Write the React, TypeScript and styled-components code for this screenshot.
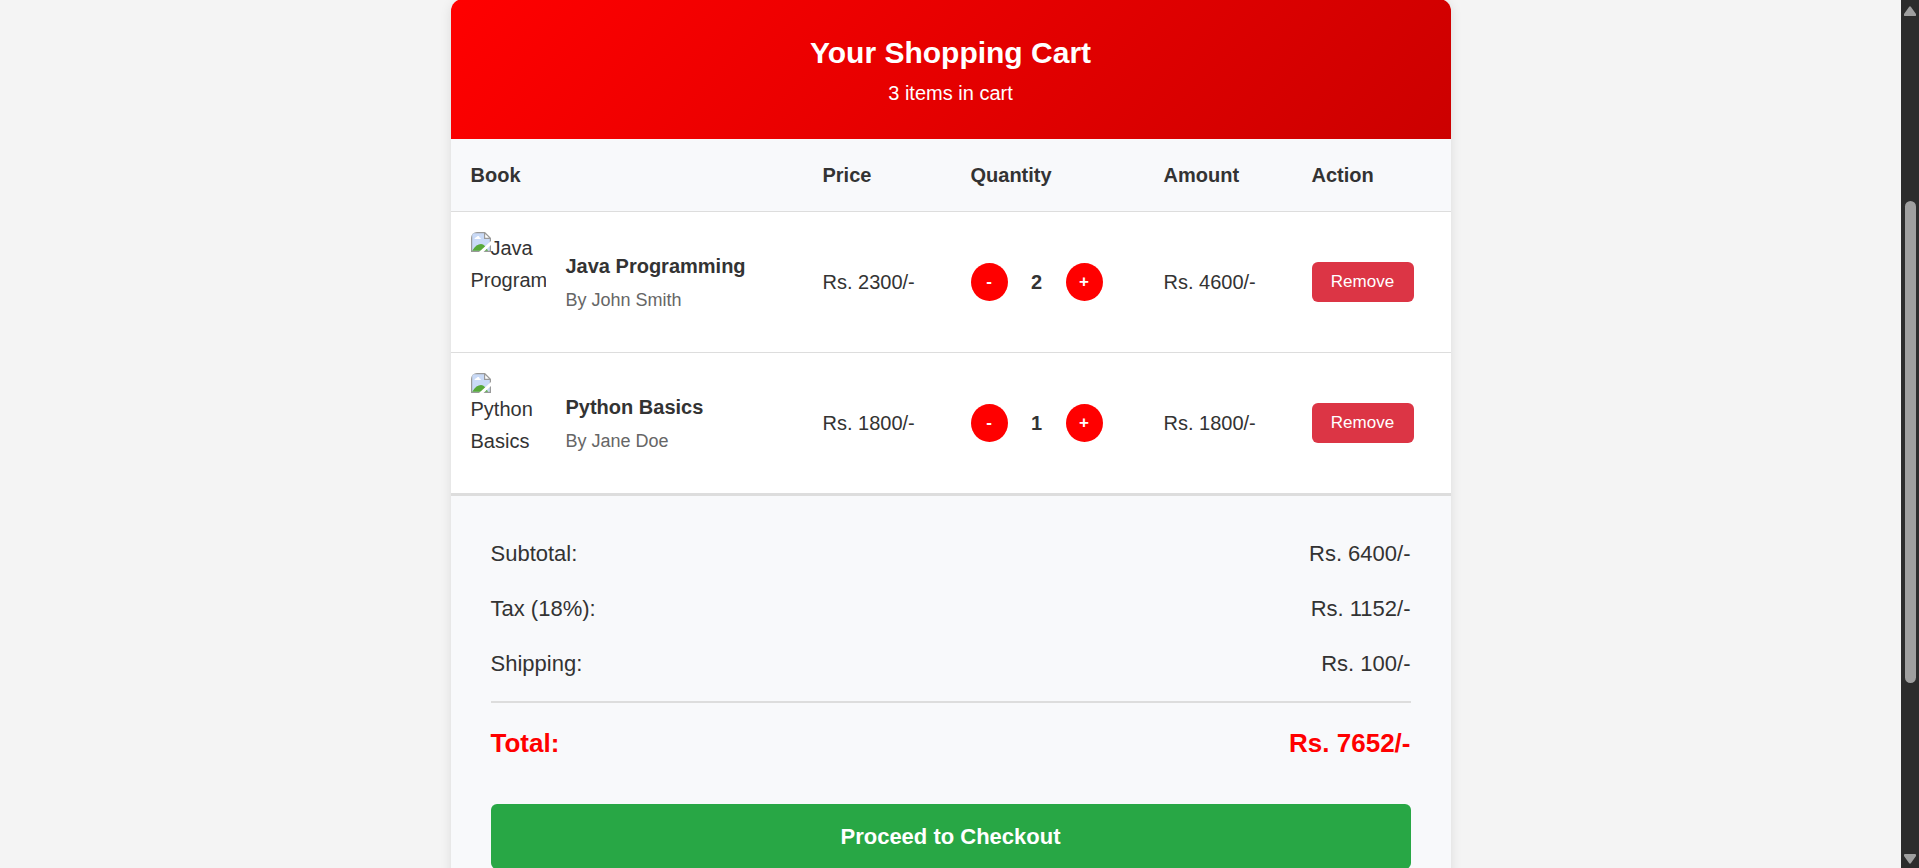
import React from "react";
import styled, { createGlobalStyle } from "styled-components";

const GlobalStyle = createGlobalStyle`
  * { box-sizing: border-box; }
  body {
    margin: 0;
    background: #f4f4f4;
    color: #333;
    font-family: "Liberation Sans", Arial, sans-serif;
    font-size: 20px;
    line-height: 32px;
  }
  h1, h2, p, dl, dd, dt { margin: 0; }
  button { border: none; font-family: inherit; cursor: pointer; }
`;

const Page = styled.div`
  display: flex;
  height: 100vh;
`;

const Content = styled.main`
  flex: 1;
  overflow-y: auto;
  scrollbar-width: none;
`;

const Card = styled.section`
  max-width: 1000px;
  margin: -1px auto 40px;
  background: #fff;
  border-radius: 12px;
  overflow: hidden;
  box-shadow: 0 2px 12px rgba(0, 0, 0, 0.1);
`;

const CartHeader = styled.header`
  padding: 30px;
  text-align: center;
  color: #fff;
  background: linear-gradient(135deg, #ff0000, #cc0000);
`;

const Title = styled.h1`
  font-size: 30px;
  line-height: 48px;
`;

const CartTable = styled.table`
  width: 100%;
  table-layout: fixed;
  border-collapse: separate;
  border-spacing: 0;
`;

const Column = styled.col<{ $width?: number }>`
  width: ${({ $width }) => ($width ? `${$width}px` : "auto")};
`;

const HeadCell = styled.th`
  padding: 20px;
  text-align: left;
  background: #f8f9fb;
  border-bottom: 1px solid #ddd;
`;

const Cell = styled.td`
  padding: 20px;
  vertical-align: middle;
  white-space: nowrap;
  tr:not(:last-child) > & { border-bottom: 1px solid #ddd; }
`;

const Book = styled.div`
  display: flex;
  align-items: center;
  gap: 20px;
`;

const Cover = styled.div`
  flex: none;
  width: 75px;
  height: 100px;
  border-radius: 6px;
  overflow: hidden;
  white-space: normal;
`;

const MissingIcon = styled.svg`
  float: left;
  width: 20px;
  height: 20px;
`;

const BookInfo = styled.div`
  display: flex;
  flex-direction: column;
  gap: 4px;
`;

const BookName = styled.h2`
  font-size: 20px;
  line-height: 32px;
`;

const Author = styled.p`
  font-size: 18px;
  line-height: 28px;
  color: #666;
`;

const Stepper = styled.div`
  display: flex;
  align-items: center;
  gap: 10px;
`;

const StepButton = styled.button`
  width: 37px;
  height: 38px;
  padding: 0;
  border-radius: 50%;
  background: #ff0000;
  color: #fff;
  font-size: 17px;
  font-weight: bold;
`;

const Count = styled.span`
  width: 38px;
  text-align: center;
  font-weight: bold;
`;

const RemoveButton = styled.button`
  display: block;
  width: 102px;
  height: 40px;
  padding: 0;
  border-radius: 6px;
  background: #dc3545;
  color: #fff;
  font-size: 17px;
`;

const Summary = styled.div`
  padding: 40px;
  background: #f8f9fb;
  border-top: 3px solid #ddd;
`;

const Lines = styled.dl`
  display: flex;
  flex-direction: column;
  gap: 20px;
`;

const Line = styled.div<{ $total?: boolean }>`
  display: flex;
  justify-content: space-between;
  font-size: ${({ $total }) => ($total ? 26 : 22)}px;
  line-height: ${({ $total }) => ($total ? 41 : 35)}px;
  ${({ $total }) =>
    $total &&
    `
    padding-top: 20px;
    border-top: 2px solid #ddd;
    color: #ff0000;
    font-weight: bold;
  `}
`;

const CheckoutButton = styled.button`
  display: block;
  width: 100%;
  height: 65px;
  margin-top: 40px;
  border-radius: 6px;
  background: #28a745;
  color: #fff;
  font-size: 22px;
  font-weight: bold;
`;

const Scrollbar = styled.div`
  display: flex;
  flex-direction: column;
  align-items: center;
  width: 18px;
  padding: 6px 0 4px;
  background: #2c2c2c;
`;

const Arrow = styled.svg`
  flex: none;
  width: 12px;
  height: 10px;
  fill: #9f9f9f;
`;

const Track = styled.div`
  display: flex;
  flex-direction: column;
  flex: 1;
`;

const Space = styled.div<{ $grow: number }>`
  flex: ${({ $grow }) => $grow} 0 0;
`;

const Thumb = styled.div`
  flex: 482 0 0;
  width: 11px;
  border-radius: 6px;
  background: #9f9f9f;
`;

const items = [
  { name: "Java Programming", author: "John Smith", price: 2300, quantity: 2 },
  { name: "Python Basics", author: "Jane Doe", price: 1800, quantity: 1 },
];

const rupees = (value: number) => `Rs. ${value}/-`;
const subtotal = items.reduce((sum, i) => sum + i.price * i.quantity, 0);
const count = items.reduce((sum, i) => sum + i.quantity, 0);
const tax = Math.round(subtotal * 0.18);
const shipping = 100;

const MissingCover = ({ name }: { name: string }) => (
  <Cover>
    <MissingIcon viewBox="0 0 20 20" aria-hidden="true">
      <path d="M0 0H14L20 6V20H0Z" fill="#9a9a9a" />
      <path d="M1.200 1.200H13V7H18.800V18.800H1.200Z" fill="#c9daf7" />
      <path d="M14.200 2L18 5.800H14.200Z" fill="#fff" />
      <path d="M3.500 7C3.500 5.500 5 5.500 5.500 5C6.500 3.500 8.500 4 8.500 5.500C10 5.500 10 7 9.500 7Z" fill="#fff" />
      <path d="M1.200 18.800C4 14 7 12 10 12C13 12 15 15 17 18.800Z" fill="#57a93a" />
      <path d="M8 20L20 9V13L12.500 20Z" fill="#fff" />
    </MissingIcon>
    {name}
  </Cover>
);

export default function App() {
  return (
    <>
      <GlobalStyle />
      <Page>
        <Content>
          <Card>
            <CartHeader>
              <Title>Your Shopping Cart</Title>
              <p>{`${count} items in cart`}</p>
            </CartHeader>
            <CartTable>
              <colgroup>
                <Column />
                <Column $width={148} />
                <Column $width={193} />
                <Column $width={148} />
                <Column $width={159} />
              </colgroup>
              <thead>
                <tr>
                  {["Book", "Price", "Quantity", "Amount", "Action"].map((label) => (
                    <HeadCell key={label} scope="col">{label}</HeadCell>
                  ))}
                </tr>
              </thead>
              <tbody>
                {items.map((item) => (
                  <tr key={item.name}>
                    <Cell>
                      <Book>
                        <MissingCover name={item.name} />
                        <BookInfo>
                          <BookName>{item.name}</BookName>
                          <Author>{`By ${item.author}`}</Author>
                        </BookInfo>
                      </Book>
                    </Cell>
                    <Cell>{rupees(item.price)}</Cell>
                    <Cell>
                      <Stepper>
                        <StepButton type="button" aria-label={`Decrease ${item.name}`}>-</StepButton>
                        <Count>{item.quantity}</Count>
                        <StepButton type="button" aria-label={`Increase ${item.name}`}>+</StepButton>
                      </Stepper>
                    </Cell>
                    <Cell>{rupees(item.price * item.quantity)}</Cell>
                    <Cell>
                      <RemoveButton type="button">Remove</RemoveButton>
                    </Cell>
                  </tr>
                ))}
              </tbody>
            </CartTable>
            <Summary>
              <Lines>
                <Line><dt>Subtotal:</dt><dd>{rupees(subtotal)}</dd></Line>
                <Line><dt>Tax (18%):</dt><dd>{rupees(tax)}</dd></Line>
                <Line><dt>Shipping:</dt><dd>{rupees(shipping)}</dd></Line>
                <Line $total><dt>Total:</dt><dd>{rupees(subtotal + tax + shipping)}</dd></Line>
              </Lines>
              <CheckoutButton type="button">Proceed to Checkout</CheckoutButton>
            </Summary>
          </Card>
        </Content>
        <Scrollbar aria-hidden="true">
          <Arrow viewBox="0 0 12 10"><path d="M5 1Q6 -0.500 7 1L12 8Q12.500 10 11 10H1Q-0.500 10 0 8Z" /></Arrow>
          <Track>
            <Space $grow={185} />
            <Thumb />
            <Space $grow={171} />
          </Track>
          <Arrow viewBox="0 0 12 10"><path d="M5 9Q6 10.500 7 9L12 2Q12.500 0 11 0H1Q-0.500 0 0 2Z" /></Arrow>
        </Scrollbar>
      </Page>
    </>
  );
}
